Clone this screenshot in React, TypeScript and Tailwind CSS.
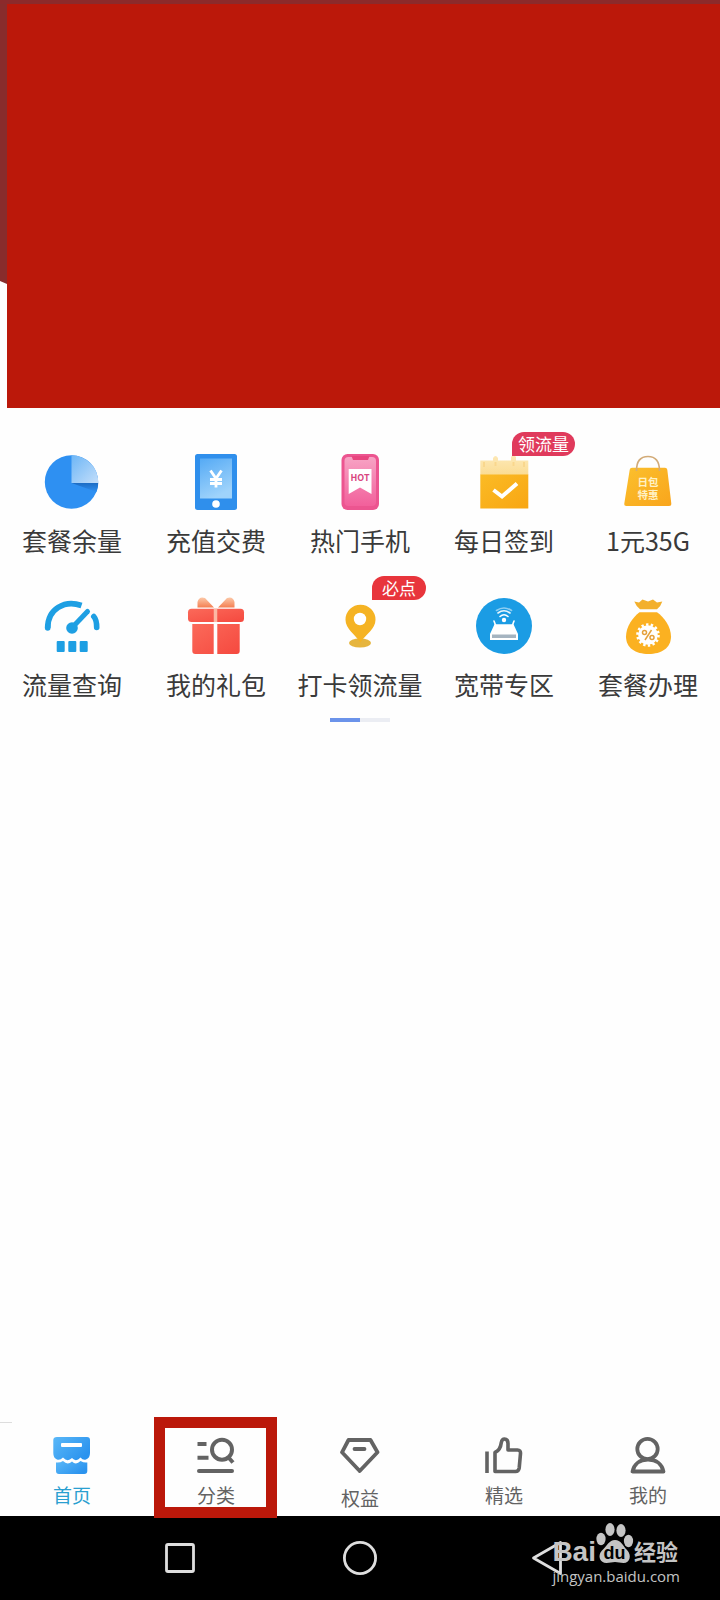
import type { ReactNode } from 'react'

interface Shortcut {
  label: string
  icon: ReactNode
  badge?: ReactNode
}

interface Tab {
  label: string
  icon: ReactNode
  active?: boolean
  marked?: boolean
  labelClass?: string
}

const shortcuts: Shortcut[] = [
  {
    label: '套餐余量',
    icon: (
      <>
        <defs>
          <linearGradient id="pie" x1="0" y1="0" x2="1" y2="1">
            <stop offset="0" stopColor="#6db6f6" />
            <stop offset="1" stopColor="#c3defa" />
          </linearGradient>
          <linearGradient id="pieShade" x1="0" y1="0" x2="0" y2="1">
            <stop offset="0" stopColor="#1c6cc4" />
            <stop offset="1" stopColor="#2e90f2" />
          </linearGradient>
        </defs>
        <circle cx="27.5" cy="28" r="26.7" fill="#2e90f2" />
        <path d="M27.5 29H54.2C54.2 32 53.6 35 52.5 38Z" fill="url(#pieShade)" />
        <path d="M27.5 29V1.3A26.7 26.7 0 0 1 54.2 29Z" fill="url(#pie)" />
      </>
    ),
  },
  {
    label: '充值交费',
    icon: (
      <>
        <defs>
          <linearGradient id="pay" x1="0" y1="0" x2="0.4" y2="1">
            <stop offset="0" stopColor="#55aaf5" />
            <stop offset="1" stopColor="#9fd3fb" />
          </linearGradient>
        </defs>
        <rect x="7" y="0" width="42" height="56" rx="2.5" fill="#2f8fec" />
        <rect x="12" y="4.5" width="32" height="40" fill="url(#pay)" />
        <path d="M22.5 16.5 28 24.5 33.5 16.5M28 24.5V33.5M22 25.5H34M22 29.5H34" fill="none" stroke="#fff" strokeWidth="2.8" />
        <circle cx="28" cy="50" r="3.8" fill="#fff" />
      </>
    ),
  },
  {
    label: '热门手机',
    icon: (
      <>
        <defs>
          <linearGradient id="hot" x1="0" y1="0" x2="0" y2="1">
            <stop offset="0" stopColor="#f7a3c4" />
            <stop offset="1" stopColor="#f2609b" />
          </linearGradient>
        </defs>
        <rect x="9.5" y="0" width="37.5" height="56" rx="6" fill="#ec5590" />
        <rect x="12.5" y="3" width="31.5" height="49" rx="4" fill="url(#hot)" />
        <path d="M19.5 2H37.5L36 6H21Z" fill="#e8457f" />
        <path d="M16.7 15H39.5V40L28 33.5 16.7 40Z" fill="#fff" />
        <text x="28" y="27" textAnchor="middle" fontSize="9" fontWeight="700" fill="#d9467f">HOT</text>
      </>
    ),
  },
  {
    label: '每日签到',
    badge: (
      <span className="absolute left-1/2 -top-1.5 ml-2 flex h-6 items-center whitespace-nowrap rounded-full rounded-bl-sm bg-[#e03a5c] px-1.5 text-[17px] text-white">
        领流量
      </span>
    ),
    icon: (
      <>
        <defs>
          <linearGradient id="cal" x1="0" y1="0" x2="1" y2="1">
            <stop offset="0" stopColor="#fbbb25" />
            <stop offset="1" stopColor="#f8a613" />
          </linearGradient>
          <linearGradient id="calTop" x1="0" y1="0" x2="0" y2="1">
            <stop offset="0" stopColor="#fde9b8" />
            <stop offset="1" stopColor="#fbdc92" />
          </linearGradient>
        </defs>
        <path d="M4.3 21V6.5H17V4Q19.5 0 22 4V6.5H35V3Q37.5 -1 40 3V6.5H52.3V21Z" fill="url(#calTop)" />
        <path d="M8 8V13M19.5 8V12M37.5 8V12M48 8V13" stroke="#f9d78d" strokeWidth="2" />
        <rect x="4.3" y="20.5" width="48" height="34" fill="url(#cal)" />
        <path d="M17.5 36 26 42.5 41 29.5" fill="none" stroke="#fff" strokeWidth="4" />
      </>
    ),
  },
  {
    label: '1元35G',
    icon: (
      <>
        <defs>
          <linearGradient id="bag" x1="0" y1="0" x2="1" y2="1">
            <stop offset="0" stopColor="#fbc02d" />
            <stop offset="1" stopColor="#f9a51c" />
          </linearGradient>
        </defs>
        <path d="M12 13.7H45Q47 13.7 47.3 15.7L51.3 49.5Q51.5 52 49 52H6.5Q4 52 4.3 49.5L9.7 15.7Q10 13.7 12 13.7Z" fill="url(#bag)" />
        <path d="M16.5 17C16.5 7 20 2.5 28 2.5S39.5 7 39.5 17" fill="none" stroke="#d2ab78" strokeWidth="1.6" />
        <g fill="#fff1c4" fontSize="10.5" fontWeight="700" textAnchor="middle">
          <text x="28" y="32">日包</text>
          <text x="28" y="44.5">特惠</text>
        </g>
      </>
    ),
  },
  {
    label: '流量查询',
    icon: (
      <>
        <g fill="none" stroke="#1e9fe3" strokeWidth="5.6" strokeLinecap="round">
          <path d="M3.7 30C3.7 11 20.5 1.5 37.5 7.5" strokeLinecap="butt" />
          <path d="M3.7 28V30" />
          <path d="M49.8 18.5C52 21 52.7 25.5 52.7 29.5" />
          <path d="M28 29.7 43.5 13.5" strokeWidth="5" />
        </g>
        <circle cx="28" cy="30" r="5.8" fill="#1e9fe3" />
        <g fill="#1e9fe3">
          <rect x="12.7" y="43" width="8" height="11" rx="1" />
          <rect x="24.3" y="43" width="8" height="11" rx="1" />
          <rect x="35.7" y="43" width="8" height="11" rx="1" />
        </g>
      </>
    ),
  },
  {
    label: '我的礼包',
    icon: (
      <>
        <defs>
          <linearGradient id="gift" x1="0" y1="0" x2="1" y2="1">
            <stop offset="0" stopColor="#fb6a5a" />
            <stop offset="1" stopColor="#f5493f" />
          </linearGradient>
          <linearGradient id="bow" x1="0" y1="0" x2="0" y2="1">
            <stop offset="0" stopColor="#fcc9a8" />
            <stop offset="1" stopColor="#f47f52" />
          </linearGradient>
        </defs>
        <path d="M9.5 9.5V4Q11 -2 17 0L26 9.5ZM30 9.5 39 0Q45 -2 46.5 4V9.5Z" fill="url(#bow)" />
        <rect x="0" y="10.7" width="56" height="13.3" rx="3.5" fill="url(#gift)" />
        <path d="M4.3 26H25.7V56H7.3Q4.3 56 4.3 53ZM29.3 26H51.7V53Q51.7 56 48.7 56H29.3Z" fill="url(#gift)" />
        <path d="M27.5 10.7V24" stroke="#fcb8a4" strokeWidth="3.5" />
      </>
    ),
  },
  {
    label: '打卡领流量',
    badge: (
      <span className="absolute left-1/2 -top-1.5 ml-3 flex h-6 items-center whitespace-nowrap rounded-full rounded-bl-sm bg-[#e8353c] px-2.5 text-[17px] text-white">
        必点
      </span>
    ),
    icon: (
      <>
        <ellipse cx="28" cy="45" rx="11" ry="4.5" fill="#e6b53e" />
        <path d="M28.5 6.7A15 15 0 0 1 43.5 21.7C43.5 31 34 36 28.3 44.5 23 36 13.5 31 13.5 21.7A15 15 0 0 1 28.5 6.7Z" fill="#f5b323" />
        <circle cx="28" cy="21" r="6.2" fill="#fff" />
      </>
    ),
  },
  {
    label: '宽带专区',
    icon: (
      <>
        <circle cx="28" cy="28" r="28" fill="#1b9ce4" />
        <circle cx="28" cy="22" r="2.2" fill="#fff" />
        <g fill="none" stroke="#fff" strokeWidth="1.6" strokeLinecap="round">
          <path d="M24 18.5Q28 15 32 18.5" />
          <path d="M22 15Q28 10.5 34 15" opacity="0.9" />
          <path d="M20.5 12.5Q28 7.5 35.5 12.5" opacity="0.5" />
          <path d="M18 23 19.5 27M38 23 36.5 27" />
        </g>
        <path d="M18.5 26.3H37.5L42 36V42H14V36Z" fill="#fff" />
        <rect x="16" y="36.5" width="24" height="3.5" fill="#a5b4c0" />
      </>
    ),
  },
  {
    label: '套餐办理',
    icon: (
      <>
        <path d="M14.3 3.5 19 4.5 22.5 1.5 28 3.5 33 1.5 37 4.5 42.3 3.5Q41 8 37 11.3H20Q16 8 14.3 3.5Z" fill="#f3b02c" />
        <path d="M19.5 14.3H37C44 19 51 29 51 38.5C51 50 41.5 56 28.5 56S6 50 6 38.5C6 29 13 19 19.5 14.3Z" fill="#fbb121" />
        <circle cx="28" cy="37" r="9.8" fill="#fff" />
        <circle cx="28" cy="37" r="10.5" fill="none" stroke="#fff" strokeWidth="2.6" strokeDasharray="2.4 2.32" />
        <g fill="none" stroke="#e5a13c" strokeWidth="1.5">
          <circle cx="24.5" cy="34.5" r="2" />
          <circle cx="32" cy="39.5" r="2" />
          <path d="M31.5 32 25 42" />
        </g>
      </>
    ),
  },
]

const tabs: Tab[] = [
  {
    label: '首页',
    active: true,
    icon: (
      <>
        <defs>
          <linearGradient id="home" x1="0" y1="0" x2="1" y2="0.6">
            <stop offset="0" stopColor="#5ab8f8" />
            <stop offset="1" stopColor="#2b93ee" />
          </linearGradient>
        </defs>
        <path d="M5 2H35Q38 2 38 5V18Q38 23 34 24.5 31 25.5 28.5 22.5 24 27.5 20 23 15.5 27.5 11 22.5 8 25.5 5 24.5 1.3 23 1.3 18V5Q1.3 2 5 2Z" fill="url(#home)" />
        <path d="M4 27.5Q8 28 11 26 15.5 30.5 20 26.5 24 30.5 28.5 26 32 28 35.3 27.5V36Q35.3 39 32.3 39H7Q4 39 4 36Z" fill="url(#home)" />
        <rect x="9" y="8" width="21" height="4" rx="1" fill="#fff" />
      </>
    ),
  },
  {
    label: '分类',
    marked: true,
    icon: (
      <g fill="none" stroke="currentColor" strokeWidth="4">
        <path d="M1.5 9H10.5M1.5 22.7H12.5" />
        <path d="M3 36H36" strokeLinecap="round" />
        <circle cx="26" cy="14.7" r="10" />
        <path d="M32 22 37 27.5" />
      </g>
    ),
  },
  {
    label: '权益',
    labelClass: 'pt-[3px] -mb-[3px]',
    icon: (
      <g fill="none" stroke="currentColor" strokeWidth="3.8" strokeLinejoin="round">
        <path d="M8.5 5H30.5L37.5 17.3 19.7 36 2 17.3Z" />
        <path d="M14.5 14H24.5" strokeLinecap="round" />
      </g>
    ),
  },
  {
    label: '精选',
    icon: (
      <g fill="none" stroke="currentColor" strokeWidth="3.6" strokeLinejoin="round">
        <path d="M3 16.5V38" />
        <path d="M11 17.5V36.5H31.5Q34.7 36.5 35.2 33L36.5 18.5Q36.7 15 33.5 15H24V8.5Q24 4 20.5 4 18 4 17.3 7.5 16.5 15 11 17.5Z" />
      </g>
    ),
  },
  {
    label: '我的',
    icon: (
      <g fill="none" stroke="currentColor" strokeWidth="3.8" strokeLinejoin="round">
        <circle cx="19.5" cy="14" r="10.2" />
        <path d="M4.5 36.5H35.5C34 29 28 24.5 20 24.5S6 29 4.5 36.5Z" />
      </g>
    ),
  },
]

function ShortcutTile({ label, icon, badge }: Shortcut) {
  return (
    <a href="#" className="relative flex h-36 flex-col items-center gap-3.5 pt-4">
      <svg viewBox="0 0 56 56" className="size-14 shrink-0 overflow-visible" aria-hidden="true">{icon}</svg>
      <span className="whitespace-nowrap text-[25px] leading-8 text-[#3a3a3a]">{label}</span>
      {badge}
    </a>
  )
}

function TabItem({ label, icon, active, marked, labelClass = '' }: Tab) {
  return (
    <a href="#" className={`relative flex flex-col items-center gap-2 pt-[13px] pb-[9px] ${active ? 'text-[#2a9fd0]' : 'text-[#636363]'}`}>
      <svg viewBox="0 0 40 40" className="size-10" aria-hidden="true">{icon}</svg>
      <span className={`text-[19px] leading-6 ${labelClass}`}>{label}</span>
      {marked && <span className="absolute -top-[5px] -bottom-[2px] left-[10px] right-[11px] border-[11px] border-[#bb180a]" />}
    </a>
  )
}

function Watermark() {
  return (
    <div className="absolute right-10 top-1.5 flex flex-col text-[#c4c4c4]">
      <div className="flex h-[42px] items-end">
        <span className="font-['Liberation_Sans'] text-[28px] font-bold leading-6">Bai</span>
        <svg viewBox="0 0 38 42" className="h-[42px] w-[38px]" aria-hidden="true">
          <g fill="currentColor">
            <ellipse cx="5" cy="17" rx="4.6" ry="6.2" />
            <ellipse cx="14" cy="7.5" rx="4.6" ry="6.5" />
            <ellipse cx="25" cy="8.5" rx="4.6" ry="6.5" />
            <ellipse cx="32.5" cy="19" rx="4.6" ry="6.2" />
            <path d="M19 18C25 18 27 24 31 28 36 33 34 41 27.5 41 24 41 22 40 19 40S14 41 10.5 41C4 41 1 34 6 28.5 11 24 13 18 19 18Z" />
          </g>
          <text x="18.5" y="37" textAnchor="middle" fontFamily="Liberation Sans" fontSize="18" fontWeight="700" fill="#000">du</text>
        </svg>
        <span className="text-[22px] font-bold leading-7">经验</span>
      </div>
      <span className="font-['Open_Sans'] text-[15px] leading-6">jingyan.baidu.com</span>
    </div>
  )
}

export default function App() {
  return (
    <div className="flex min-h-screen flex-col bg-[#fefefe] font-['Noto_Sans_CJK_SC',sans-serif]">
      <header className="flex border-t-4 border-[#8c2a2b]">
        <div className="h-[280px] w-[7px] bg-[#882c2c] [clip-path:polygon(0_0,100%_0,100%_100%,0_277px)]" />
        <div className="h-[404px] flex-1 bg-[#bb180a]" />
      </header>

      <main className="flex flex-1 flex-col items-center pt-[30px]">
        <div className="grid w-full grid-cols-5">
          {shortcuts.map((s) => (
            <ShortcutTile key={s.label} {...s} />
          ))}
        </div>
        <div className="-mt-2 flex h-1 w-[60px] bg-[#ebedf3]">
          <div className="w-1/2 bg-[#6b93ea]" />
        </div>
      </main>

      <nav className="relative z-10 grid grid-cols-5 before:absolute before:left-0 before:top-0 before:h-px before:w-3 before:bg-[#dddddd]">
        {tabs.map((t) => (
          <TabItem key={t.label} {...t} />
        ))}
      </nav>

      <footer className="relative grid h-[84px] grid-cols-3 items-center justify-items-center bg-black px-[90px]">
        <button type="button" aria-label="最近任务">
          <svg viewBox="0 0 40 40" className="size-10">
            <rect x="6.5" y="6.5" width="27" height="27" rx="1.5" fill="none" stroke="#dedede" strokeWidth="2.8" />
          </svg>
        </button>
        <button type="button" aria-label="主屏幕">
          <svg viewBox="0 0 40 40" className="size-10">
            <circle cx="20" cy="20" r="15.6" fill="none" stroke="#dedede" strokeWidth="2.8" />
          </svg>
        </button>
        <button type="button" aria-label="返回">
          <svg viewBox="0 0 48 40" className="h-10 w-12">
            <path d="M17.5 20 44.5 4.5V35.5Z" fill="none" stroke="#dedede" strokeWidth="2.8" strokeLinejoin="round" />
          </svg>
        </button>
        <Watermark />
      </footer>
    </div>
  )
}
